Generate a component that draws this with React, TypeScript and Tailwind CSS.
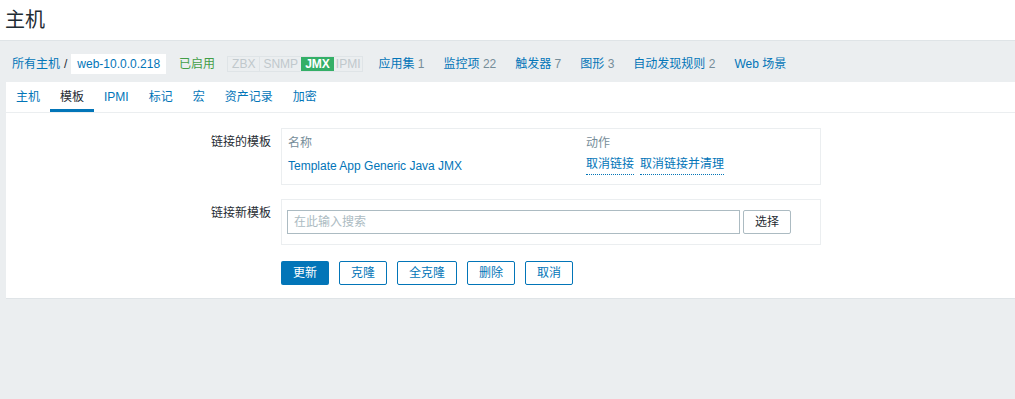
const font = { fontFamily: '"Liberation Sans", Arial, "Noto Sans CJK SC", sans-serif' };

const hostLinks = [
  ["应用集", "1"],
  ["监控项", "22"],
  ["触发器", "7"],
  ["图形", "3"],
  ["自动发现规则", "2"],
  ["Web 场景", ""],
];

const tabs = ["主机", "模板", "IPMI", "标记", "宏", "资产记录", "加密"];

export default function App() {
  return (
    <div style={font} className="w-[1015px] h-[399px] bg-[#ebeef0] text-[12px] text-[#1f2c33] overflow-hidden">
      <div className="h-[41px] bg-white border-b border-[#dfe4e7] flex items-center pl-[5px]">
        <h1 className="text-[20px] leading-none text-[#1f2c33]">主机</h1>
      </div>

      <div className="h-[41px] flex items-center pl-[12px] pt-[4px]">
        <a className="text-[#0275b8]">所有主机</a>
        <span className="mx-[4px] text-[#1f2c33]">/</span>
        <span className="bg-white h-[20px] px-[6px] flex items-center text-[#0275b8]">web-10.0.0.218</span>
        <span className="ml-[13px] text-[#429e47]">已启用</span>
        <div className="ml-[12px] flex h-[16px] border border-[#dfe4e7] text-[12px] leading-[14px]">
          <span className="px-[4px] text-[#c0c8cc] border-r border-[#dfe4e7]">ZBX</span>
          <span className="px-[3px] text-[#c0c8cc]">SNMP</span>
          <span className="px-[4px] bg-[#34af67] text-white font-bold">JMX</span>
          <span className="px-[2px] text-[#c0c8cc]">IPMI</span>
        </div>
        <div className="flex ml-[15px] gap-[19px]">
          {hostLinks.map(([label, n]) => (
            <span key={label}>
              <a className="text-[#0275b8]">{label}</a>
              {n && <span className="text-[#768d99]"> {n}</span>}
            </span>
          ))}
        </div>
      </div>

      <div className="ml-[6px] bg-white h-[217px] border-b border-[#dfe4e7]">
        <div className="h-[31px] flex border-b border-[#ebeef0]">
          {tabs.map((t) => (
            <div
              key={t}
              className={
                t === "模板"
                  ? "px-[10px] flex items-center text-[#1f2c33] border-b-[3px] border-[#0275b8] pt-[2px]"
                  : "px-[10px] flex items-center text-[#0275b8] pb-[1px]"
              }
            >
              {t}
            </div>
          ))}
        </div>

        <div className="pt-[15px]">
          <div className="flex">
            <div className="w-[265px] text-right pt-[5px]">链接的模板</div>
            <div className="ml-[10px] w-[540px] h-[57px] border border-[#ebeef0] px-[6px] pt-[5px]">
              <div className="flex text-[#768d99] h-[23px]">
                <span className="w-[298px]">名称</span>
                <span>动作</span>
              </div>
              <div className="flex">
                <a className="w-[298px] text-[#0275b8]">Template App Generic Java JMX</a>
                <a className="text-[#0275b8] border-b border-dotted border-[#0275b8] leading-[14px]">取消链接</a>
                <a className="ml-[6px] text-[#0275b8] border-b border-dotted border-[#0275b8] leading-[14px]">取消链接并清理</a>
              </div>
            </div>
          </div>

          <div className="flex mt-[14px]">
            <div className="w-[265px] text-right pt-[5px]">链接新模板</div>
            <div className="ml-[10px] w-[540px] h-[46px] border border-[#ebeef0] px-[5px] pt-[10px] flex">
              <div className="w-[453px] h-[24px] border border-[#acbbc2] px-[6px] flex items-center text-[#acbbc2]">在此输入搜索</div>
              <button className="ml-[3px] w-[48px] h-[24px] border border-[#acbbc2] rounded-[2px] text-[#1f2c33]">选择</button>
            </div>
          </div>

          <div className="flex ml-[275px] mt-[16px] gap-[10px]">
            <button className="w-[48px] h-[24px] bg-[#0275b8] text-white rounded-[2px]">更新</button>
            <button className="w-[48px] h-[24px] border border-[#0275b8] text-[#0275b8] rounded-[2px]">克隆</button>
            <button className="w-[60px] h-[24px] border border-[#0275b8] text-[#0275b8] rounded-[2px]">全克隆</button>
            <button className="w-[48px] h-[24px] border border-[#0275b8] text-[#0275b8] rounded-[2px]">删除</button>
            <button className="w-[48px] h-[24px] border border-[#0275b8] text-[#0275b8] rounded-[2px]">取消</button>
          </div>
        </div>
      </div>
    </div>
  );
}
